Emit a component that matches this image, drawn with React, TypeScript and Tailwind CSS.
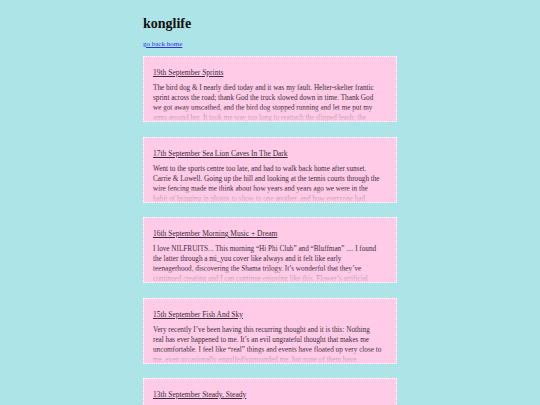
import React from 'react';

type Post = { title: string; lines: string[] };

const posts: Post[] = [
  {
    title: '19th September Sprints',
    lines: [
      'The bird dog & I nearly died today and it was my fault. Helter-skelter frantic',
      'sprint across the road; thank God the truck slowed down in time. Thank God',
      'we got away unscathed, and the bird dog stopped running and let me put my',
      'arms around her. It took me way too long to reattach the slipped leash; the',
    ],
  },
  {
    title: '17th September Sea Lion Caves In The Dark',
    lines: [
      'Went to the sports centre too late, and had to walk back home after sunset.',
      'Carrie & Lowell. Going up the hill and looking at the tennis courts through the',
      'wire fencing made me think about how years and years ago we were in the',
      'habit of bringing in photos to show to one another, and how everyone had',
    ],
  },
  {
    title: '16th September Morning Music + Dream',
    lines: [
      'I love NILFRUITS... This morning \u201cHi Phi Club\u201d and \u201cBluffman\u201d .... I found',
      'the latter through a mi_yuu cover like always and it felt like early',
      'teenagerhood, discovering the Shama trilogy. It\u2019s wonderful that they\u2019ve',
      'continued creating and I can continue enjoying like this. Flower\u2019s artificial',
    ],
  },
  {
    title: '15th September Fish And Sky',
    lines: [
      'Very recently I\u2019ve been having this recurring thought and it is this: Nothing',
      'real has ever happened to me. It\u2019s an evil ungrateful thought that makes me',
      'uncomfortable. I feel like \u201creal\u201d things and events have floated up very close to',
      'me, even occasionally engulfed/surrounded me, but none of them have',
    ],
  },
  {
    title: '13th September Steady, Steady',
    lines: [
      'Some days are slow and some days are slower still, and today was one of the',
      'slower ones; I walked the long way round and counted the gulls on the roofs.',
      'Nothing much happened, but that was fine, and the bird dog agreed with me.',
      'We came home before dark and sat by the window until it was time for bed.',
    ],
  },
];

function PostCard({ post }: { post: Post }) {
  return (
    <div className="relative h-[66px] shrink-0 overflow-hidden border border-dotted border-white bg-[#ffcbe6] px-[9px] pt-[11px]">
      <a href="#" className="block text-[7.5px] leading-[10px] text-[#3b2b3b] underline">
        {post.title}
      </a>
      <div className="mt-[5px] text-[7.2px] leading-[10px] text-[#3b2b3b]">
        {post.lines.map((l, i) => (
          <div key={i} className="whitespace-nowrap">
            {l}
          </div>
        ))}
      </div>
      <div className="pointer-events-none absolute inset-x-0 bottom-0 h-[12px] bg-gradient-to-b from-[#ffcbe6]/30 to-[#ffcbe6]/90" />
    </div>
  );
}

export default function App() {
  return (
    <div
      className="h-[405px] overflow-hidden bg-[#ade4e7]"
      style={{ fontFamily: '"Liberation Serif", "DejaVu Serif", serif' }}
    >
      <div className="mx-auto w-[254px] pt-[15px]">
        <h1 className="text-[14px] font-bold leading-[18px] text-[#111]">konglife</h1>
        <a href="#" className="mt-[7px] block text-[7px] leading-[9px] text-[#2a33e0] underline">
          go back home
        </a>
        <div className="mt-[7px] flex flex-col gap-[14.5px]">
          {posts.map((p) => (
            <PostCard key={p.title} post={p} />
          ))}
        </div>
      </div>
    </div>
  );
}
